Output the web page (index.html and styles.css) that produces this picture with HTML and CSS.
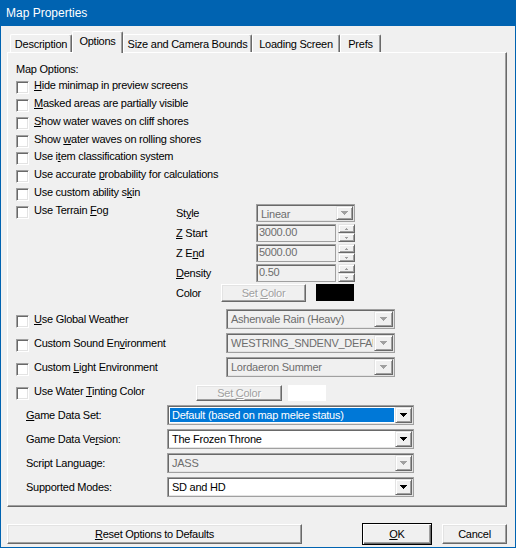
FILE: index.html
```html
<!DOCTYPE html>
<html>
<head>
<meta charset="utf-8">
<link rel="stylesheet" href="styles.css">
</head>
<body>
<div class="window">
  <div class="titlebar">Map Properties</div>
  <div class="client">
    <div class="tabs">
      <div class="tab w1">Description</div>
      <div class="tab sel w2">Options</div>
      <div class="tab w3">Size and Camera Bounds</div>
      <div class="tab w4">Loading Screen</div>
      <div class="tab w5">Prefs</div>
    </div>
    <div class="panel">
      <div class="heading">Map Options:</div>
      <div class="cb-row"><span class="cb"></span><span class="lbl"><u>H</u>ide minimap in preview screens</span></div>
      <div class="cb-row"><span class="cb"></span><span class="lbl"><u>M</u>asked areas are partially visible</span></div>
      <div class="cb-row"><span class="cb"></span><span class="lbl"><u>S</u>how water waves on cliff shores</span></div>
      <div class="cb-row"><span class="cb"></span><span class="lbl">Show <u>w</u>ater waves on rolling shores</span></div>
      <div class="cb-row"><span class="cb"></span><span class="lbl">Use i<u>t</u>em classification system</span></div>
      <div class="cb-row"><span class="cb"></span><span class="lbl">Use accurate <u>p</u>robability for calculations</span></div>
      <div class="cb-row"><span class="cb"></span><span class="lbl">Use custom ability s<u>k</u>in</span></div>

      <div class="fog">
        <div class="fog-left">
          <div class="cb-row"><span class="cb"></span><span class="lbl">Use Terrain <u>F</u>og</span></div>
        </div>
        <div class="fog-grid">
          <div class="fg-row">
            <span class="fg-lbl">St<u>y</u>le</span>
            <div class="combo dis style-combo"><div class="combo-text"><span class="val">Linear</span></div><div class="dd"><svg width="7" height="4" viewBox="0 0 7 4" shape-rendering="crispEdges"><path d="M0 0h7v1H0zM1 1h5v1H1zM2 2h3v1H2zM3 3h1v1H3z" fill="#a0a0a0"/></svg></div></div>
          </div>
          <div class="fg-row">
            <span class="fg-lbl"><u>Z</u> Start</span>
            <div class="field">3000.00</div>
            <div class="spin"><div class="sb"><svg width="3" height="2" viewBox="0 0 3 2" shape-rendering="crispEdges"><path d="M1 0h1v1H1zM0 1h3v1H0z" fill="#a0a0a0"/></svg></div><div class="sb"><svg width="3" height="2" viewBox="0 0 3 2" shape-rendering="crispEdges"><path d="M0 0h3v1H0zM1 1h1v1H1z" fill="#a0a0a0"/></svg></div></div>
          </div>
          <div class="fg-row">
            <span class="fg-lbl">Z E<u>n</u>d</span>
            <div class="field">5000.00</div>
            <div class="spin"><div class="sb"><svg width="3" height="2" viewBox="0 0 3 2" shape-rendering="crispEdges"><path d="M1 0h1v1H1zM0 1h3v1H0z" fill="#a0a0a0"/></svg></div><div class="sb"><svg width="3" height="2" viewBox="0 0 3 2" shape-rendering="crispEdges"><path d="M0 0h3v1H0zM1 1h1v1H1z" fill="#a0a0a0"/></svg></div></div>
          </div>
          <div class="fg-row">
            <span class="fg-lbl"><u>D</u>ensity</span>
            <div class="field">0.50</div>
            <div class="spin"><div class="sb"><svg width="3" height="2" viewBox="0 0 3 2" shape-rendering="crispEdges"><path d="M1 0h1v1H1zM0 1h3v1H0z" fill="#a0a0a0"/></svg></div><div class="sb"><svg width="3" height="2" viewBox="0 0 3 2" shape-rendering="crispEdges"><path d="M0 0h3v1H0zM1 1h1v1H1z" fill="#a0a0a0"/></svg></div></div>
          </div>
          <div class="fg-row">
            <span class="fg-lbl color-lbl">Color</span>
            <div class="btn dis fog-btn"><span>Set <u>C</u>olor</span></div>
            <div class="swatch black"></div>
          </div>
        </div>
      </div>

      <div class="env-row">
        <div class="env-left"><div class="cb-row"><span class="cb"></span><span class="lbl"><u>U</u>se Global Weather</span></div></div>
        <div class="combo dis env-combo"><div class="combo-text"><span class="val">Ashenvale Rain (Heavy)</span></div><div class="dd dd-wide"><svg width="7" height="4" viewBox="0 0 7 4" shape-rendering="crispEdges"><path d="M0 0h7v1H0zM1 1h5v1H1zM2 2h3v1H2zM3 3h1v1H3z" fill="#a0a0a0"/></svg></div></div>
      </div>
      <div class="env-row">
        <div class="env-left"><div class="cb-row"><span class="cb"></span><span class="lbl">Custom Sound En<u>v</u>ironment</span></div></div>
        <div class="combo dis env-combo"><div class="combo-text"><span class="val">WESTRING_SNDENV_DEFAULT</span></div><div class="dd dd-wide"><svg width="7" height="4" viewBox="0 0 7 4" shape-rendering="crispEdges"><path d="M0 0h7v1H0zM1 1h5v1H1zM2 2h3v1H2zM3 3h1v1H3z" fill="#a0a0a0"/></svg></div></div>
      </div>
      <div class="env-row">
        <div class="env-left"><div class="cb-row"><span class="cb"></span><span class="lbl">Custom <u>L</u>ight Environment</span></div></div>
        <div class="combo dis env-combo"><div class="combo-text"><span class="val">Lordaeron Summer</span></div><div class="dd dd-wide"><svg width="7" height="4" viewBox="0 0 7 4" shape-rendering="crispEdges"><path d="M0 0h7v1H0zM1 1h5v1H1zM2 2h3v1H2zM3 3h1v1H3z" fill="#a0a0a0"/></svg></div></div>
      </div>
      <div class="water-row">
        <div class="water-left"><div class="cb-row"><span class="cb"></span><span class="lbl">Use Water <u>T</u>inting Color</span></div></div>
        <div class="btn dis water-btn"><span>Set <u>C</u>olor</span></div>
        <div class="swatch white"></div>
      </div>

      <div class="game-row">
        <span class="game-lbl"><u>G</u>ame Data Set:</span>
        <div class="combo game-combo"><div class="combo-text"><span class="val hl">Default (based on map melee status)</span></div><div class="dd"><svg width="7" height="4" viewBox="0 0 7 4" shape-rendering="crispEdges"><path d="M0 0h7v1H0zM1 1h5v1H1zM2 2h3v1H2zM3 3h1v1H3z" fill="#000"/></svg></div></div>
      </div>
      <div class="game-row">
        <span class="game-lbl">Game Data Ve<u>r</u>sion:</span>
        <div class="combo game-combo"><div class="combo-text"><span class="val">The Frozen Throne</span></div><div class="dd"><svg width="7" height="4" viewBox="0 0 7 4" shape-rendering="crispEdges"><path d="M0 0h7v1H0zM1 1h5v1H1zM2 2h3v1H2zM3 3h1v1H3z" fill="#000"/></svg></div></div>
      </div>
      <div class="game-row">
        <span class="game-lbl">Script Language:</span>
        <div class="combo dis game-combo"><div class="combo-text"><span class="val">JASS</span></div><div class="dd"><svg width="7" height="4" viewBox="0 0 7 4" shape-rendering="crispEdges"><path d="M0 0h7v1H0zM1 1h5v1H1zM2 2h3v1H2zM3 3h1v1H3z" fill="#a0a0a0"/></svg></div></div>
      </div>
      <div class="game-row">
        <span class="game-lbl">Supported Modes:</span>
        <div class="combo game-combo"><div class="combo-text"><span class="val">SD and HD</span></div><div class="dd"><svg width="7" height="4" viewBox="0 0 7 4" shape-rendering="crispEdges"><path d="M0 0h7v1H0zM1 1h5v1H1zM2 2h3v1H2zM3 3h1v1H3z" fill="#000"/></svg></div></div>
      </div>
    </div>
    <div class="buttons">
      <div class="btn reset-btn"><span><u>R</u>eset Options to Defaults</span></div>
      <div class="spacer"></div>
      <div class="btn default ok-btn"><span><u>O</u>K</span></div>
      <div class="btn cancel-btn"><span>Cancel</span></div>
    </div>
  </div>
</div>
</body>
</html>
```

FILE: styles.css
```css
* { box-sizing: border-box; }
html, body { margin: 0; padding: 0; }
body {
  width: 516px;
  height: 548px;
  overflow: hidden;
  font-family: "Liberation Sans", Arial, sans-serif;
  font-size: 11px;
  letter-spacing: -0.25px;
  color: #000;
  background: #0063b1;
}
u { text-decoration: underline; text-underline-offset: 1px; }

.window {
  width: 516px;
  height: 548px;
  background: #0063b1;
  padding: 0 1px 1px 1px;
  display: flex;
  flex-direction: column;
}
.titlebar {
  height: 26px;
  flex: none;
  color: #fff;
  font-size: 12px;
  letter-spacing: 0;
  line-height: 26px;
  padding-left: 5px;
}
.client {
  flex: 1;
  background: #f0f0f0;
  display: flex;
  flex-direction: column;
  padding-top: 5px;
}

/* tabs */
.tabs {
  display: flex;
  align-items: flex-end;
  height: 22px;
  margin: 0 0 -1px 9px;
  position: relative;
  z-index: 1;
}
.tab {
  height: 18px;
  margin-bottom: 1px;
  border-top: 1px solid #fff;
  border-left: 1px solid #fff;
  border-right: 1px solid #696969;
  box-shadow: inset -1px 0 #a0a0a0;
  border-radius: 2px 2px 0 0;
  text-align: center;
  line-height: 16px;
  padding-top: 1px;
  background: #f0f0f0;
  white-space: nowrap;
}
.tab.sel {
  height: 22px;
  margin-bottom: 0;
  line-height: 17px;
  padding-top: 1px;
}
.w1 { width: 62px; }
.w2 { width: 51px; }
.w3 { width: 129px; }
.w4 { width: 88px; }
.w5 { width: 41px; }

/* panel */
.panel {
  flex: none;
  margin: 0 8px 0 6px;
  height: 455px;
  border-top: 1px solid #fff;
  border-left: 1px solid #fff;
  border-right: 1px solid #696969;
  border-bottom: 1px solid #696969;
  box-shadow: inset -1px -1px #a0a0a0;
  padding: 10px 0 0 8px;
}
.heading { height: 16px; line-height: 13px; }

.cb-row {
  display: flex;
  align-items: flex-start;
  height: 17.86px;
}
.cb {
  flex: none;
  width: 13px;
  height: 13px;
  margin-top: 2px;
  background: #fff;
  border: 1px solid;
  border-color: #a0a0a0 #fff #fff #a0a0a0;
  box-shadow: inset 1px 1px #696969, inset -1px -1px #e3e3e3;
}
.lbl {
  margin-left: 5px;
  line-height: 13px;
  white-space: nowrap;
}

/* terrain fog */
.fog { display: flex; height: 100px; }
.fog-left { width: 160px; flex: none; }
.fog-grid { display: flex; flex-direction: column; }
.fg-row { display: flex; align-items: flex-start; height: 20px; }
.fg-lbl { width: 80px; line-height: 18px; flex: none; }
.fg-lbl.color-lbl { width: 45px; }

.field {
  width: 80px;
  height: 18px;
  border: 1px solid #a0a0a0;
  box-shadow: inset 1px 1px #696969;
  background: #f0f0f0;
  color: #6d6d6d;
  padding-left: 2px;
  line-height: 15px;
}
.spin {
  width: 17px;
  height: 18px;
  margin-left: 2px;
  display: flex;
  flex-direction: column;
}
.sb {
  flex: 1;
  border: 1px solid;
  border-color: #e3e3e3 #696969 #696969 #e3e3e3;
  box-shadow: inset 1px 1px #fff, inset -1px -1px #a0a0a0;
  background: #f0f0f0;
  display: flex;
  align-items: center;
  justify-content: center;
}
.sb svg { display: block; }

/* combo */
.combo {
  display: flex;
  height: 20px;
  border: 1px solid #a0a0a0;
  box-shadow: inset 1px 1px #696969, inset -1px -1px #e3e3e3;
  background: #fff;
  padding: 1px;
}
.combo.dis { background: #f0f0f0; color: #6d6d6d; }
.combo-text { flex: 1; min-width: 0; padding: 1px; overflow: hidden; }
.combo-text .val {
  display: block;
  height: 100%;
  padding-left: 2px;
  line-height: 14px;
  white-space: nowrap;
  overflow: hidden;
}
.combo-text .val.hl { background: #0078d7; color: #fff; }
.dd {
  flex: none;
  width: 17px;
  border: 1px solid;
  border-color: #e3e3e3 #696969 #696969 #e3e3e3;
  box-shadow: inset 1px 1px #fff, inset -1px -1px #a0a0a0;
  background: #f0f0f0;
  display: flex;
  align-items: center;
  justify-content: center;
}
.dd svg { display: block; }
.dd-wide { width: 19px; }

.style-combo { width: 99px; height: 18px; }
.env-combo { width: 169px; }
.game-combo { width: 247px; }

/* buttons */
.btn {
  display: flex;
  align-items: center;
  justify-content: center;
  border: 1px solid;
  border-color: #fff #696969 #696969 #fff;
  box-shadow: inset -1px -1px #a0a0a0, inset 1px 1px #e3e3e3;
  background: #f0f0f0;
  white-space: nowrap;
}
.btn.dis { color: #a0a0a0; text-shadow: 1px 1px 0 #fff; }
.btn.default {
  border: 1px solid #000;
  box-shadow: inset 1px 1px #fff, inset -1px -1px #696969, inset -2px -2px #a0a0a0;
}
.fog-btn { width: 85px; height: 18px; }
.swatch { flex: none; }
.swatch.black { width: 38px; height: 17px; margin-left: 10px; background: #000; }

.env-row { display: flex; height: 24px; }
.fog + .env-row { margin-top: 5px; }
.env-left { width: 210px; flex: none; padding-top: 4px; }

.water-row { display: flex; align-items: flex-start; height: 24px; }
.water-left { width: 180px; flex: none; padding-top: 4px; }
.water-btn { width: 86px; height: 16px; margin-top: 4px; }
.swatch.white { width: 38px; height: 16px; margin-top: 4px; margin-left: 6px; background: #fff; }

.game-row { display: flex; align-items: flex-start; height: 24px; padding-left: 10px; }
.game-lbl { width: 141px; flex: none; line-height: 20px; }

.buttons {
  display: flex;
  align-items: center;
  height: 22px;
  margin: 16px 8px 0 6px;
}
.reset-btn { width: 295px; height: 20px; }
.spacer { flex: 1; }
.ok-btn { width: 70px; height: 22px; }
.cancel-btn { width: 65px; height: 20px; margin-left: 10px; }
```
